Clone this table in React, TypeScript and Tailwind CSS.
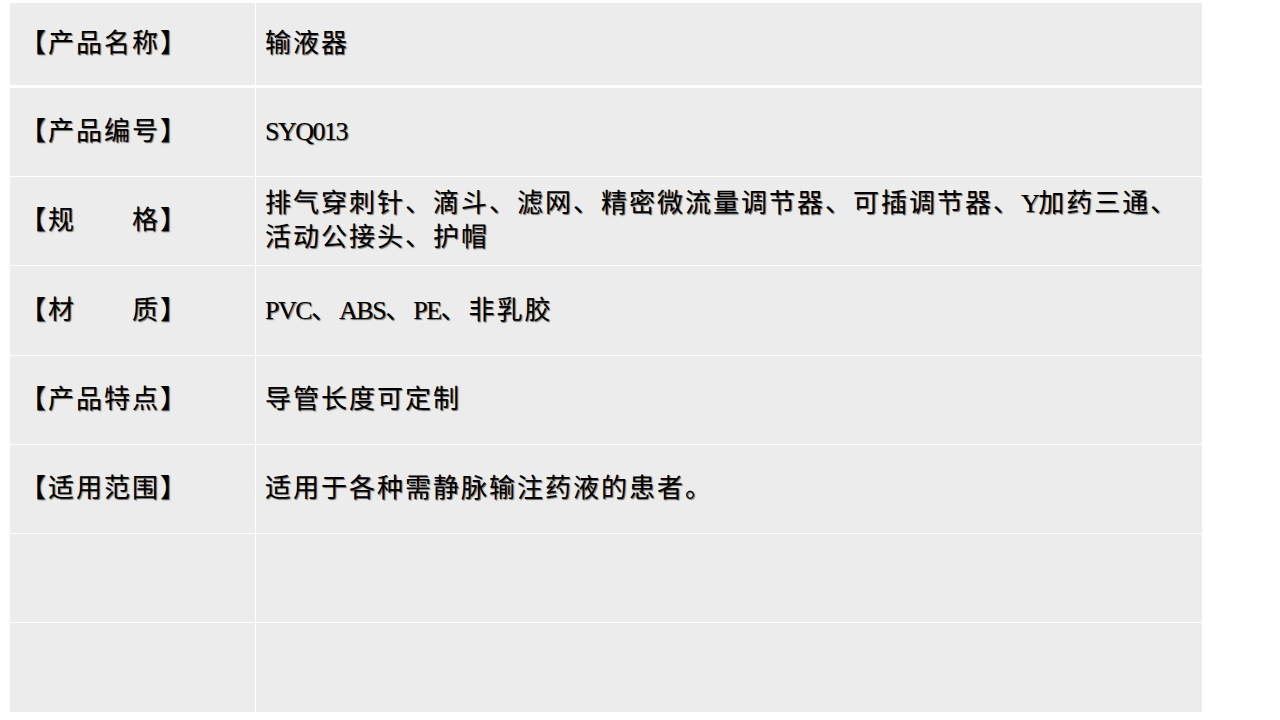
import React from 'react';

interface Row {
  label: string;
  value: React.ReactNode;
  h: string;
}

// narrow serif latin, like the half-width SimSun glyphs
const Latin: React.FC<{ children: React.ReactNode }> = ({ children }) => (
  <span className="[font-family:'Liberation_Serif',serif] tracking-[-1.5px]">{children}</span>
);

const rows: Row[] = [
  { label: '【产品编号】', value: <Latin>SYQ013</Latin>, h: 'h-[88px]' },
  {
    label: '【规　　格】',
    value: (
      <>
        排气穿刺针、滴斗、滤网、精密微流量调节器、可插调节器、<Latin>Y</Latin>加药三通、
        <br />
        活动公接头、护帽
      </>
    ),
    h: 'h-[88px]',
  },
  {
    label: '【材　　质】',
    value: (
      <>
        <Latin>PVC</Latin>、<Latin>ABS</Latin>、<Latin>PE</Latin>、非乳胶
      </>
    ),
    h: 'h-[89px]',
  },
  { label: '【产品特点】', value: '导管长度可定制', h: 'h-[88px]' },
  { label: '【适用范围】', value: '适用于各种需静脉输注药液的患者。', h: 'h-[88px]' },
  { label: '', value: '', h: 'h-[88px]' },
  { label: '', value: '', h: 'h-[89px]' },
];

const cellText =
  "text-[26px] leading-[34px] tracking-[2px] text-black [text-shadow:1px_1px_1px_rgba(0,0,0,0.55)] [font-family:'Liberation_Serif','Noto_Sans_CJK_SC',serif]";

const App: React.FC = () => {
  return (
    <div className="min-h-[720px] bg-white pt-[3px] pl-[10px]">
      <div className="w-[1192px]">
        {/* first row sits apart */}
        <div className="grid grid-cols-[245px_946px] gap-x-px h-[82px] mb-[3px]">
          <div className="bg-[#ececec] flex items-center pl-[10px]">
            <span className={cellText}>【产品名称】</span>
          </div>
          <div className="bg-[#ececec] flex items-center pl-[9px]">
            <span className={cellText}>输液器</span>
          </div>
        </div>

        <div className="flex flex-col gap-y-px">
          {rows.map((row, i) => (
            <div key={i} className={`grid grid-cols-[245px_946px] gap-x-px ${row.h}`}>
              <div className="bg-[#ececec] flex items-center pl-[10px]">
                <span className={cellText}>{row.label}</span>
              </div>
              <div className="bg-[#ececec] flex items-center pl-[9px]">
                <span className={cellText}>{row.value}</span>
              </div>
            </div>
          ))}
        </div>
      </div>
    </div>
  );
};

export default App;
